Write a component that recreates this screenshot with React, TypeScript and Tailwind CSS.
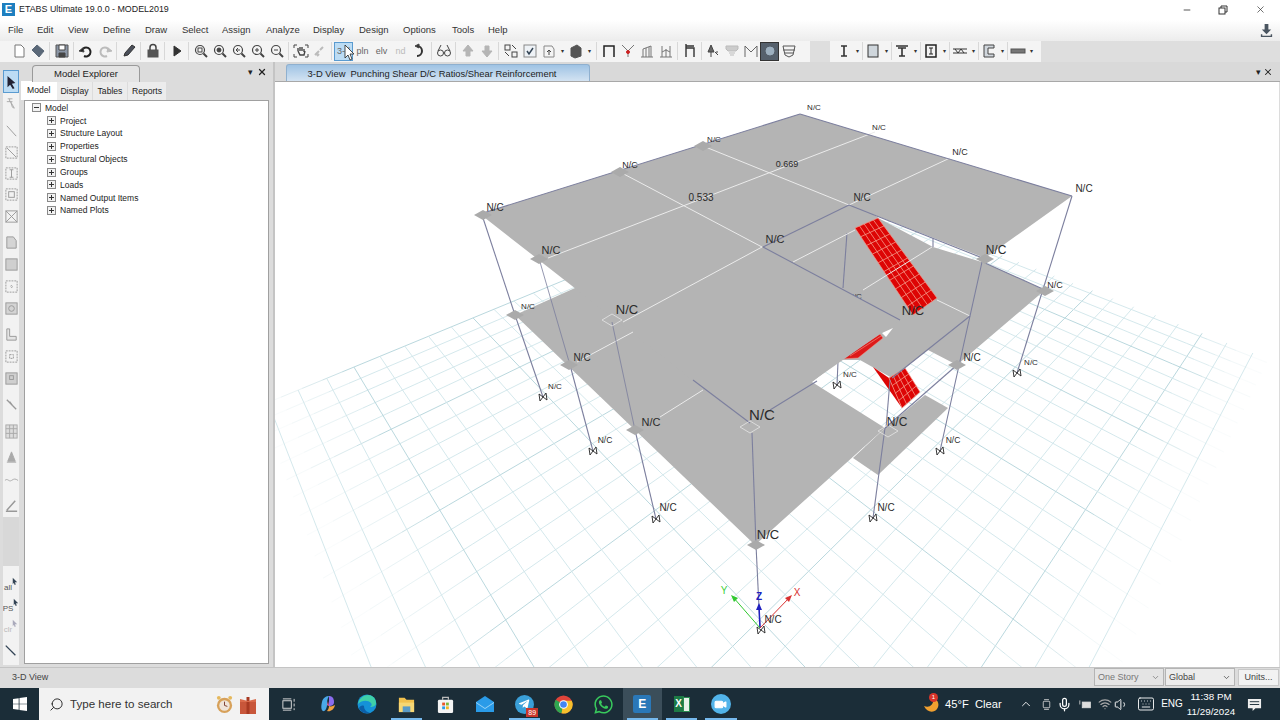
import React from "react";
import { FaWhatsapp, FaTelegramPlane } from "react-icons/fa";
import { Search, ChevronUp, ChevronDown, Mic, Volume1, Wifi, Keyboard, Video, Minus, X } from "lucide-react";

const FONT = "font-['Liberation_Sans',sans-serif]";

/* ---------- 3-D view maths: ground grid from the two vanishing points ---------- */
const pt = (p: number, q: number) => {
  const d = 1 - p - q;
  return [(807 - 70 * p - 1490 * q) / d, (180 + 106 * p + 102 * q) / d];
};

const P_MAX = 0.385;
const Q_MAX = 0.445;
const FADE = [1, 0.75, 0.5, 0.3, 0.12];

type Seg = { a: number[]; b: number[]; major: boolean; o: number };

const gridLines = () => {
  const out: Seg[] = [];
  const span = (at: (t: number) => number[], end: number, fade: number, major: boolean) => {
    out.push({ a: at(0), b: at(end - fade), major, o: 1 });
    FADE.forEach((o, n) => {
      const s = end - fade + (fade * n) / FADE.length;
      const e = end - fade + (fade * (n + 1)) / FADE.length;
      out.push({ a: at(s), b: at(e), major, o });
    });
  };
  for (let i = 0; (i * 0.0698) / 5 <= P_MAX; i++) {
    const p = (i * 0.0698) / 5;
    span((t) => pt(p, t), Q_MAX, 0.05, i % 5 === 0);
  }
  for (let i = -3; 0.0468 + (i * 0.0704) / 5 <= Q_MAX; i++) {
    const q = 0.0468 + (i * 0.0704) / 5;
    span((t) => pt(t, q), P_MAX, 0.04, (i + 5) % 5 === 0);
  }
  return out;
};

type V = [number, number];
const mix = (a: V, b: V, t: number): V => [a[0] + (b[0] - a[0]) * t, a[1] + (b[1] - a[1]) * t];

const Mesh = ({ a, b, c, d, nu, nv }: { a: V; b: V; c: V; d: V; nu: number; nv: number }) => {
  const lines: React.ReactNode[] = [];
  for (let i = 1; i < nu; i++) {
    const s = mix(a, b, i / nu);
    const e = mix(d, c, i / nu);
    lines.push(<line key={`u${i}`} x1={s[0]} y1={s[1]} x2={e[0]} y2={e[1]} stroke="#f49a8a" strokeWidth="0.8" />);
  }
  for (let i = 1; i < nv; i++) {
    const s = mix(a, d, i / nv);
    const e = mix(b, c, i / nv);
    lines.push(<line key={`v${i}`} x1={s[0]} y1={s[1]} x2={e[0]} y2={e[1]} stroke="#f49a8a" strokeWidth="0.8" />);
  }
  return (
    <g>
      <polygon points={[a, b, c, d].map((v) => v.join(",")).join(" ")} fill="#dd0505" stroke="#f49a8a" strokeWidth="0.7" />
      {lines}
    </g>
  );
};

const DARK = "#7c7f9e";
const darkLines: number[][] = [
  [480, 214, 800, 114],
  [800, 114, 1072, 196],
  [849, 205, 763, 247],
  [763, 247, 900, 320],
  [849, 205, 985, 259],
  [693, 380, 750, 423],
  [770, 410, 817, 381],
  [892, 378, 970, 316],
  [885, 428, 957, 365],
  [985, 263, 1045, 290],
];
const whiteLines: number[][] = [
  [620, 172, 762, 247],
  [703, 146, 849, 205],
  [548, 258, 875, 132],
  [762, 247, 623, 322],
  [950, 158, 849, 205],
  [793, 262, 855, 230],
  [932, 247, 863, 290],
  [937, 300, 970, 316],
  [577, 362, 633, 332],
  [660, 417, 703, 390],
];
const columns: number[][] = [
  [483, 218, 515, 315],
  [515, 315, 543, 397],
  [570, 365, 593, 451],
  [635, 430, 656, 519],
  [756, 545, 760, 628],
  [885, 428, 873, 518],
  [847, 233, 843, 288],
  [838, 362, 837, 385],
  [890, 380, 886, 428],
  [933, 238, 933, 247],
];
const labels: [string, number, number, number][] = [
  ["N/C", 814, 110, 8],
  ["N/C", 879, 130, 8],
  ["N/C", 714, 142, 8],
  ["N/C", 960, 155, 9],
  ["N/C", 630, 168, 9],
  ["0.669", 787, 167, 9],
  ["N/C", 862, 201, 10],
  ["N/C", 1084, 192, 10],
  ["N/C", 495, 211, 10],
  ["0.533", 701, 201, 10],
  ["N/C", 775, 243, 11],
  ["N/C", 551, 254, 11],
  ["N/C", 996, 254, 12],
  ["N/C", 627, 314, 13],
  ["N/C", 528, 309, 8],
  ["N/C", 1055, 288, 9],
  ["N/C", 913, 315, 13],
  ["N/C", 582, 361, 10],
  ["N/C", 972, 361, 10],
  ["N/C", 555, 389, 8],
  ["N/C", 850, 377, 8],
  ["N/C", 1031, 365, 8],
  ["N/C", 605, 443, 8.5],
  ["N/C", 953, 443, 8.5],
  ["N/C", 651, 426, 11],
  ["N/C", 897, 426, 12],
  ["N/C", 762, 420, 15],
  ["N/C", 668, 511, 10],
  ["N/C", 886, 511, 10],
  ["N/C", 768, 539, 13],
  ["N/C", 773, 623, 10],
];
const supports: V[] = [
  [543, 397],
  [593, 451],
  [656, 519],
  [837, 385],
  [873, 518],
  [940, 451],
  [1017, 373],
  [761, 630],
];
const nodes: V[] = [
  [483, 215],
  [539, 259],
  [620, 172],
  [703, 146],
  [515, 315],
  [569, 365],
  [635, 430],
  [985, 259],
  [1045, 291],
  [957, 365],
  [756, 545],
];
const outlineNodes: V[] = [
  [612, 320],
  [750, 427],
  [888, 431],
];

const ModelView = () => (
  <svg viewBox="275 82 1004 585" className="block w-[1004px] h-[585px] bg-white">
    {gridLines().map((l, i) => (
      <line
        key={i}
        x1={l.a[0]}
        y1={l.a[1]}
        x2={l.b[0]}
        y2={l.b[1]}
        stroke={l.major ? "#bad8de" : "#cfe5ea"}
        strokeWidth={l.major ? 1 : 0.9}
        opacity={l.o}
      />
    ))}

    {/* lower storey */}
    <polygon
      points="515,315 575,288 700,200 850,198 880,219 933,247 985,263 1045,290 957,365 928,350 892,378 860,360 840,360 812,382 885,428 755,545"
      fill="#b4b4b4"
    />
    <polygon points="853,458 878,475 948,408 925,395 885,428" fill="#b4b4b4" />
    <Mesh a={[855, 228]} b={[878, 218]} c={[937, 298]} d={[913, 315]} nu={5} nv={10} />
    <polygon points="842,359 880,334 883,338 858,358" fill="#dd1a1a" stroke="#f49a8a" strokeWidth="0.5" />
    <line x1="850" y1="356" x2="881" y2="336" stroke="#f49a8a" strokeWidth="0.6" />
    <polygon points="882,333 893,328 886,337" fill="#ffffff" />
    <polygon points="873,367 889,378 902,408" fill="#dd0505" />
    <Mesh a={[889, 378]} b={[905, 368]} c={[920, 392]} d={[902, 408]} nu={4} nv={4} />
    <text x="855" y="299" textAnchor="middle" fontSize="8" fill="#333">
      N/C
    </text>

    {columns.map((c, i) => (
      <line key={i} x1={c[0]} y1={c[1]} x2={c[2]} y2={c[3]} stroke={DARK} strokeWidth="1.1" />
    ))}

    {/* upper storey */}
    <polygon points="800,114 1072,196 985,258 849,205 763,247 900,320 750,425 480,214" fill="#b4b4b4" />
    {whiteLines.map((c, i) => (
      <line key={i} x1={c[0]} y1={c[1]} x2={c[2]} y2={c[3]} stroke="#ebebeb" strokeWidth="1" />
    ))}
    {darkLines.map((c, i) => (
      <line key={i} x1={c[0]} y1={c[1]} x2={c[2]} y2={c[3]} stroke={DARK} strokeWidth="1.1" />
    ))}
    <line x1="612" y1="322" x2="635" y2="430" stroke={DARK} strokeWidth="1" opacity="0.8" />
    <line x1="540" y1="262" x2="570" y2="365" stroke={DARK} strokeWidth="1" opacity="0.8" />
    <line x1="752" y1="433" x2="756" y2="545" stroke={DARK} strokeWidth="1.1" />
    <line x1="982" y1="262" x2="940" y2="451" stroke={DARK} strokeWidth="1.1" />
    <line x1="1072" y1="196" x2="1017" y2="373" stroke={DARK} strokeWidth="1.1" />

    {nodes.map((n, i) => (
      <polygon
        key={i}
        points={`${n[0] - 9},${n[1]} ${n[0]},${n[1] - 5} ${n[0] + 9},${n[1]} ${n[0]},${n[1] + 5}`}
        fill="#aaaaaa"
      />
    ))}
    {outlineNodes.map((n, i) => (
      <polygon
        key={i}
        points={`${n[0] - 10},${n[1]} ${n[0]},${n[1] - 6} ${n[0] + 10},${n[1]} ${n[0]},${n[1] + 6}`}
        fill="none"
        stroke="#e4e4e4"
        strokeWidth="0.8"
      />
    ))}

    {/* axes */}
    <g fontSize="10">
      <line x1="760" y1="628" x2="759" y2="606" stroke="#2020c0" strokeWidth="1.5" />
      <polygon points="759,603 756,610 762,610" fill="#2020c0" />
      <text x="759" y="600" textAnchor="middle" fill="#2020c0" fontWeight="bold">
        Z
      </text>
      <line x1="760" y1="628" x2="733" y2="597" stroke="#30c830" strokeWidth="1" />
      <polygon points="731,595 738,598 734,602" fill="#30c830" />
      <text x="724" y="594" textAnchor="middle" fill="#40d040">
        Y
      </text>
      <line x1="760" y1="628" x2="790" y2="597" stroke="#d83030" strokeWidth="1" />
      <polygon points="792,595 785,598 789,602" fill="#d83030" />
      <text x="797" y="596" textAnchor="middle" fill="#d83030">
        X
      </text>
    </g>

    {supports.map((s, i) => (
      <g key={i} stroke="#222" strokeWidth="0.9" fill="none">
        <path d={`M${s[0] - 4} ${s[1] - 3}L${s[0] + 4} ${s[1] + 3}L${s[0] + 3} ${s[1] - 4}L${s[0] - 3} ${s[1] + 4}Z`} />
      </g>
    ))}

    <g fill="#2b2b2b" textAnchor="middle">
      {labels.map(([t, x, y, size], i) => (
        <text key={i} x={x} y={y} fontSize={size}>
          {t}
        </text>
      ))}
    </g>
  </svg>
);

/* ---------- toolbar glyphs ---------- */
const G = ({ children, cls = "" }: { children: React.ReactNode; cls?: string }) => (
  <svg viewBox="0 0 16 16" className={`w-4 h-4 ${cls}`} fill="none" stroke="#444" strokeWidth="1">
    {children}
  </svg>
);

const Zoom = ({ inner }: { inner?: React.ReactNode }) => (
  <G>
    <circle cx="7" cy="7" r="4.5" strokeWidth="1.2" />
    <line x1="10.5" y1="10.5" x2="14" y2="14" strokeWidth="2" />
    {inner}
  </G>
);

const Btn = ({ children, cls = "" }: { children?: React.ReactNode; cls?: string }) => (
  <div className={`w-[19px] h-[19px] flex items-center justify-center shrink-0 ${cls}`}>{children}</div>
);

const Drop = () => <div className="w-[8px] text-center text-[6px] leading-none text-[#333] shrink-0">▾</div>;
const Sep = ({ w = "w-[5px]" }: { w?: string }) => <div className={`${w} h-[18px] shrink-0 flex justify-center`}><div className="w-px h-full bg-[#d8d8d8]" /></div>;
const Txt = ({ children, cls = "" }: { children: React.ReactNode; cls?: string }) => (
  <span className={`text-[9px] leading-none text-[#666] ${cls}`}>{children}</span>
);

const Toolbar = () => (
  <div className="flex h-[22px] bg-[#dedede]">
    <div className="flex items-center w-[810px] bg-[#f4f4f4] pl-[9px]">
      <Btn><G><path d="M4 2h6l3 3v9H4z" fill="#fff" stroke="#777" /></G></Btn>
      <Btn><G><path d="M2 7l5-5 7 6-5 6z" fill="#5a6878" stroke="#5a6878" /></G></Btn>
      <Sep />
      <Btn><G><path d="M2 2h12v12H2z" fill="#8a95a5" stroke="#555" /><path d="M5 2h6v5H5z" fill="#fff" /><path d="M5 10h6v4H5z" fill="#444" /></G></Btn>
      <Sep />
      <Btn><G><path d="M4 7a4.5 4.5 0 1 1 2 6" strokeWidth="2" stroke="#222" /><path d="M1 8l4-3 1 4z" fill="#222" /></G></Btn>
      <Btn><G><path d="M12 7a4.5 4.5 0 1 0-2 6" strokeWidth="2" stroke="#bbb" /><path d="M15 8l-4-3-1 4z" fill="#bbb" stroke="#bbb" /></G></Btn>
      <Sep />
      <Btn><G><path d="M3 13l1-3 7-8 3 2-7 8z" fill="#4a4f5a" stroke="#333" /></G></Btn>
      <Sep />
      <Btn><G><rect x="3" y="7" width="10" height="7" fill="#555" stroke="#555" /><path d="M5 7V4.5a3 3 0 0 1 6 0V7" strokeWidth="1.5" /></G></Btn>
      <Sep />
      <Btn><G><path d="M5 3l7 5-7 5z" fill="#333" stroke="#333" /></G></Btn>
      <Sep />
      <Btn><Zoom inner={<rect x="5" y="5" width="4" height="4" />} /></Btn>
      <Btn><Zoom inner={<circle cx="7" cy="7" r="2" fill="#444" />} /></Btn>
      <Btn><Zoom inner={<path d="M5 7h4M5 7l2-2M5 7l2 2" />} /></Btn>
      <Btn><Zoom inner={<path d="M5 7h4M7 5v4" />} /></Btn>
      <Btn><Zoom inner={<path d="M5 7h4" />} /></Btn>
      <Sep />
      <Btn><G><path d="M1 5V2h3M12 2h3v3M15 11v3h-3M4 14H1v-3" /><path d="M5 8V5M7 8V4M9 8V4M11 9V6M5 8l2 4h4l1-4" strokeWidth="1.4" /></G></Btn>
      <Btn><G><path d="M3 12l4-4M8 7l3-3M5 13l2-2" stroke="#bbb" strokeWidth="2" /></G></Btn>
      <Sep />
      <Btn cls="bg-[#bcdcf4] border border-[#5a9bd0]"><Txt cls="text-[#333]">3-d</Txt></Btn>
      <Btn><Txt>pln</Txt></Btn>
      <Btn><Txt>elv</Txt></Btn>
      <Btn><Txt cls="text-[#bbb]">nd</Txt></Btn>
      <Btn><G><path d="M5 3a5 5 0 1 1 0 10" strokeWidth="2" stroke="#333" /><path d="M3 3l4-2v4z" fill="#333" /></G></Btn>
      <Sep />
      <Btn><G><circle cx="4.5" cy="10" r="3" /><circle cx="11.5" cy="10" r="3" /><path d="M7.5 10h1M2 8l3-6M14 8l-3-6" /></G></Btn>
      <Sep />
      <Btn><G><path d="M8 2l5 6h-3v5H6V8H3z" fill="#b5b5b5" stroke="#b5b5b5" /></G></Btn>
      <Btn><G><path d="M8 14l5-6h-3V3H6v5H3z" fill="#b5b5b5" stroke="#b5b5b5" /></G></Btn>
      <Sep />
      <Btn><G><rect x="2" y="2" width="5" height="5" /><path d="M9 2l4 4M2 9l4 4" /><rect x="9" y="9" width="5" height="5" /></G></Btn>
      <Btn><G><rect x="2" y="2" width="12" height="12" stroke="#888" fill="#eef2f6" /><path d="M5 8l2 3 4-6" stroke="#345" strokeWidth="1.5" /></G></Btn>
      <Btn><G><path d="M3 3h8l2 3v8H3z" stroke="#888" /><path d="M8 12V7M6 9l2-2 2 2" /></G></Btn>
      <Drop />
      <Btn><G><path d="M3 5l6-3 4 3v8l-6 2-4-2z" fill="#555" stroke="#555" /></G></Btn>
      <Drop />
      <Sep w="w-[6px]" />
      <Btn><G><path d="M3 14V3h10v11" strokeWidth="1.5" stroke="#222" /></G></Btn>
      <Btn><G><path d="M2 2l6 6 6-6M8 8v6" stroke="#777" /><circle cx="8" cy="9" r="1.5" fill="#c22" stroke="#c22" /></G></Btn>
      <Btn><G><path d="M2 14h12M4 14V6l8-3v11M7 14V5M10 14V4" stroke="#777" /></G></Btn>
      <Btn><G><path d="M2 14h12M4 3v11M8 6v8M12 3v11M4 9l4-2 4 2" stroke="#777" /></G></Btn>
      <Sep />
      <Btn><G><path d="M4 14V5h8v9M4 3h8M4 1v4" stroke="#333" strokeWidth="1.4" /></G></Btn>
      <Sep w="w-[4px]" />
      <Btn><G><path d="M6 2L3 9h6zM6 9v5M10 9l3 3M13 9h-2" stroke="#444" fill="#666" /></G></Btn>
      <Btn><G><path d="M2 3h12v3l-2 2H4L2 6zM5 10h6M6 12h4" stroke="#bbb" fill="#ccc" /></G></Btn>
      <Btn><G><path d="M2 14V3l6 6 6-6v11" stroke="#666" /></G></Btn>
      <Btn cls="bg-[#55606c] border border-[#333]"><G><circle cx="8" cy="8" r="4" fill="#9db0c0" stroke="#9db0c0" /></G></Btn>
      <Btn><G><path d="M2 3h12l-2 9-4 2-4-2zM2 7h12M4 10h8" stroke="#555" /></G></Btn>
    </div>
    <div className="w-[20px]" />
    <div className="flex items-center w-[211px] bg-[#f4f4f4] pl-[4px]">
      <Btn><G><path d="M5 3h6M5 13h6M8 3v10" stroke="#333" strokeWidth="1.6" /></G></Btn><Drop />
      <Sep w="w-[2px]" />
      <Btn><G><rect x="3" y="2" width="10" height="12" fill="#cfd6dc" stroke="#333" /></G></Btn><Drop />
      <Sep w="w-[2px]" />
      <Btn><G><path d="M2 3h12M4 5h8M8 5v8M5 13h6" stroke="#333" strokeWidth="1.6" /></G></Btn><Drop />
      <Sep w="w-[2px]" />
      <Btn><G><rect x="3" y="2" width="10" height="12" stroke="#222" strokeWidth="1.5" /><path d="M6 5h4M6 11h4M8 5v6" stroke="#222" /></G></Btn><Drop />
      <Sep w="w-[2px]" />
      <Btn><G><path d="M1 6h14M1 10h14M3 6l3 4 3-4 3 4" stroke="#333" /></G></Btn><Drop />
      <Sep w="w-[2px]" />
      <Btn><G><path d="M3 2h10v3H7v6h6v3H3z" fill="#d0d6dc" stroke="#444" /></G></Btn><Drop />
      <Sep w="w-[2px]" />
      <Btn><G><rect x="1" y="6" width="14" height="4" fill="#777" stroke="#555" /></G></Btn><Drop />
    </div>
    <div className="flex-1" />
  </div>
);

/* ---------- left rail ---------- */
const railIcons: [string, React.ReactNode][] = [
  ["", <path d="M4 3h5M6 3v3M7 6l4 7-2-1zM3 6h6" stroke="#aaa" />],
  ["mt-[6px]", <path d="M3 3l10 11" stroke="#999" />],
  ["mt-[1px]", <g stroke="#999" strokeDasharray="2 1"><rect x="2" y="2" width="12" height="12" /><path d="M3 3l10 10" strokeDasharray="0" /></g>],
  ["", <g stroke="#999" strokeDasharray="2 1"><rect x="2" y="2" width="12" height="12" /><path d="M6 4h4M6 12h4M8 4v8" strokeDasharray="0" /></g>],
  ["", <g stroke="#999"><rect x="2" y="2" width="12" height="12" strokeDasharray="2 1" /><rect x="5" y="5" width="6" height="6" /></g>],
  ["mt-[1px]", <g stroke="#999"><rect x="2" y="2" width="12" height="12" /><path d="M2 2l12 12M14 2L2 14" /></g>],
  ["mt-[5px]", <path d="M3 2h7l3 4v8H3z" fill="#d4d4d4" stroke="#999" />],
  ["mt-[1px]", <rect x="2" y="2" width="12" height="12" fill="#cfcfcf" stroke="#999" />],
  ["mt-[1px]", <g stroke="#999" strokeDasharray="2 1"><rect x="2" y="2" width="12" height="12" /><circle cx="8" cy="8" r="1" /></g>],
  ["mt-[1px]", <g stroke="#999"><rect x="2" y="2" width="12" height="12" fill="#d4d4d4" /><circle cx="8" cy="8" r="3" /></g>],
  ["mt-[5px]", <path d="M3 2h3v8h7v4H3z" fill="#e4e4e4" stroke="#999" />],
  ["mt-[1px]", <g stroke="#999" strokeDasharray="2 1"><rect x="2" y="2" width="12" height="12" /><rect x="6" y="6" width="4" height="4" /></g>],
  ["mt-[1px]", <g stroke="#999"><rect x="2" y="2" width="12" height="12" fill="#cfcfcf" /><rect x="6" y="5" width="4" height="4" /></g>],
  ["mt-[5px]", <path d="M3 3l10 10M6 5l3 4" stroke="#999" strokeWidth="1.4" />],
  ["mt-[6px]", <g stroke="#aaa" fill="#ddd"><rect x="2" y="1" width="12" height="14" /><path d="M2 5h12M2 10h12M6 1v14M10 1v14" /></g>],
  ["mt-[5px]", <path d="M8 2l4 10H4zM3 13h10" fill="#aaa" stroke="#aaa" />],
  ["mt-[1px]", <path d="M1 9c3-3 4 2 7 0s4-2 7 0" stroke="#aaa" />],
  ["mt-[5px]", <path d="M3 13l9-10M2 14h12" stroke="#999" strokeWidth="1.6" />],
];

const MiniArrow = ({ dim }: { dim?: boolean }) => (
  <svg viewBox="0 0 8 10" className="w-[6px] h-[9px] -mt-[6px]">
    <path d="M1 0l6 6-3 0 1 3-1.5 .6-1-3-1.5 2z" fill={dim ? "#aab" : "#345"} />
  </svg>
);

const LeftRail = () => (
  <div className="w-[16px] ml-[3px] flex flex-col bg-[#f2f2f2] mt-[8px] mb-[2px] shrink-0 overflow-hidden">
    <div className="h-[23px] w-[16px] bg-[#bcdcf4] border border-[#5a9bd0] flex items-center justify-center shrink-0">
      <svg viewBox="0 0 16 16" className="w-4 h-4"><path d="M4 1l9 8-4 1 3 5-2 1-3-5-3 3z" fill="#223" /></svg>
    </div>
    {railIcons.map(([m, icon], i) => (
      <div key={i} className={`h-[21px] ${m} flex items-center justify-center shrink-0`}>
        <svg viewBox="0 0 16 16" className="w-[15px] h-[15px]" fill="none">{icon}</svg>
      </div>
    ))}
    <div className="h-[49px] mt-[1px] bg-[#d8d8d8] shrink-0" />
    <div className="flex-1 flex flex-col items-center pt-[17px] gap-[12px] text-[8px] leading-[9px] text-[#555]">
      <div className="flex">all<MiniArrow /></div>
      <div className="flex">PS<MiniArrow /></div>
      <div className="flex text-[#bbb]">clr<MiniArrow dim /></div>
      <svg viewBox="0 0 16 16" className="w-3.5 h-3.5 -mt-[3px]" fill="none"><path d="M2 3l11 11" stroke="#345" strokeWidth="1.5" /></svg>
    </div>
  </div>
);

/* ---------- explorer ---------- */
const treeItems = ["Project", "Structure Layout", "Properties", "Structural Objects", "Groups", "Loads", "Named Output Items", "Named Plots"];

const Expander = ({ open }: { open?: boolean }) => (
  <svg viewBox="0 0 9 9" className="w-[9px] h-[9px] shrink-0">
    <rect x="0.5" y="0.5" width="8" height="8" fill="#f2f2f2" stroke="#8a8a8a" />
    <path d={open ? "M2 4.5h5" : "M2 4.5h5M4.5 2v5"} stroke="#333" />
  </svg>
);

const Explorer = () => (
  <div className="w-[252px] ml-[2px] flex flex-col shrink-0">
    <div className="h-[20px] flex items-end relative">
      <div className="ml-[11px] w-[108px] h-[17px] border border-b-0 border-[#9a9a9a] rounded-t-[4px] bg-[#e4e4e4] text-[9.5px] leading-[15px] text-center text-[#222]">
        Model Explorer
      </div>
      <span className="absolute right-[20px] top-[6px] text-[9px] leading-none text-[#222]">▾</span>
      <X className="absolute right-[6px] top-[5px] w-[10px] h-[10px] text-[#222]" strokeWidth={3} />
    </div>
    <div className="h-[18px] flex text-[8.6px] leading-[18px] text-[#222]">
      <div className="w-[36px] bg-white pl-[6px] -mt-[1px] h-[19px]">Model</div>
      <div className="w-[36px] bg-[#ececec] text-center border-r border-[#dcdcdc]">Display</div>
      <div className="w-[35px] bg-[#ececec] text-center border-r border-[#dcdcdc]">Tables</div>
      <div className="w-[38px] bg-[#ececec] text-center">Reports</div>
    </div>
    <div className="ml-[3px] w-[245px] h-[564px] bg-white border border-[#a0a0a0] text-[8.5px] text-[#222]">
      <div className="h-[13px] flex items-center pl-[7px] gap-[3px] leading-none">
        <Expander open />
        <span className="ml-[1px]">Model</span>
      </div>
      {treeItems.map((t) => (
        <div key={t} className="h-[12.85px] flex items-center pl-[22px] gap-[4px] leading-none">
          <Expander />
          <span>{t}</span>
        </div>
      ))}
    </div>
  </div>
);

/* ---------- taskbar ---------- */
const TaskIcon = ({ children, cls = "" }: { children: React.ReactNode; cls?: string }) => (
  <div className={`w-[39.3px] h-full flex items-center justify-center shrink-0 relative ${cls}`}>{children}</div>
);

const Underline = () => <div className="absolute bottom-0 left-[4px] right-[4px] h-[2px] bg-[#76b9ed]" />;

const Taskbar = () => (
  <div className={`h-[32px] bg-[#1b2d38] flex items-center text-white ${FONT}`}>
    <div className="w-[39px] flex justify-center">
      <svg viewBox="0 0 16 16" className="w-[14px] h-[14px]" fill="#fff">
        <path d="M0 2.2l6.5-.9v6.3H0zM7.4 1.2L16 0v7.6H7.4zM0 8.4h6.5v6.3L0 13.8zM7.4 8.4H16V16l-8.6-1.2z" />
      </svg>
    </div>
    <div className="w-[230px] h-full bg-[#f2f2f2] flex items-center pl-[10px] text-[#333] shrink-0">
      <Search className="w-[15px] h-[15px] -scale-x-100 text-[#222]" strokeWidth={1.5} />
      <span className="ml-[6px] text-[11.6px] leading-none w-[145px]">Type here to search</span>
      <svg viewBox="0 0 20 20" className="w-[19px] h-[19px]">
        <circle cx="10" cy="11" r="8" fill="#d7a15a" /><circle cx="10" cy="11" r="5.5" fill="#efe4da" /><path d="M10 7v4l3 1" stroke="#7a3b2e" fill="none" /><circle cx="4" cy="3" r="2" fill="#e5b85c" /><circle cx="16" cy="3" r="2" fill="#e5b85c" />
      </svg>
      <svg viewBox="0 0 20 20" className="w-[20px] h-[20px] ml-[4px]">
        <rect x="2" y="7" width="16" height="13" fill="#c8563a" /><rect x="8.5" y="3" width="3" height="17" fill="#a83a22" /><path d="M2 5l8 2 8-2v3H2z" fill="#d96a4a" />
      </svg>
    </div>
    <TaskIcon>
      <svg viewBox="0 0 16 16" className="w-[15px] h-[15px]" fill="none" stroke="#ddd">
        <rect x="2" y="4" width="9" height="8" /><path d="M2 2h9M2 14h9M14 2v3M14 7v3M14 12v2" />
      </svg>
    </TaskIcon>
    <TaskIcon>
      <svg viewBox="0 0 20 20" className="w-[20px] h-[20px]">
        <path d="M4 8c1-5 5-6 7-6-2 3-2 6-2 9s-2 7-4 6-2-5-1-9z" fill="#4aa8e8" /><path d="M11 2c3 0 5 2 5 6 0 3-2 4-5 4 0-3 0-7 0-10z" fill="#8a6cf0" /><path d="M9 17c3 1 7-1 8-6-2 1-4 2-6 1 0 2-1 4-2 5z" fill="#f0a040" /><path d="M11 12c-1 0-2-1-2-1l1-4 1 5z" fill="#e860a0" />
      </svg>
    </TaskIcon>
    <TaskIcon>
      <svg viewBox="0 0 20 20" className="w-[20px] h-[20px]">
        <circle cx="10" cy="10" r="9.5" fill="#1592d8" /><path d="M1 10C2 4 7 1 11 1c4 0 8 3 8 8 0 3-3 4-6 4 2-1 2-3 1-4-3-3-9-3-13 1z" fill="#3fd0a8" /><path d="M7 12c0 4 3 6 6 7-3 1-9 0-11-5 1-2 3-3 5-2z" fill="#0c5fa8" />
      </svg>
    </TaskIcon>
    <TaskIcon>
      <svg viewBox="0 0 20 20" className="w-[19px] h-[19px]">
        <path d="M2 3h6l2 2h8v13H2z" fill="#f2c14e" /><rect x="2" y="8" width="16" height="10" fill="#f7d774" /><rect x="6" y="12" width="8" height="6" fill="#5a9bc8" />
      </svg>
      <Underline />
    </TaskIcon>
    <TaskIcon>
      <svg viewBox="0 0 20 20" className="w-[19px] h-[19px]">
        <rect x="2" y="5" width="16" height="14" rx="1.5" fill="#f4f4f4" /><path d="M7 5V2.5h6V5" fill="none" stroke="#bbb" strokeWidth="1.3" /><rect x="6.5" y="8" width="3" height="3" fill="#e8562a" /><rect x="10.5" y="8" width="3" height="3" fill="#7db83a" /><rect x="6.5" y="12" width="3" height="3" fill="#2a9be8" /><rect x="10.5" y="12" width="3" height="3" fill="#f2b824" />
      </svg>
    </TaskIcon>
    <TaskIcon>
      <svg viewBox="0 0 20 20" className="w-[20px] h-[20px]">
        <path d="M1 8l9-6 9 6v10H1z" fill="#2a9be8" /><path d="M1 8l9 6 9-6v1l-9 6-9-6z" fill="#9bd4f6" />
      </svg>
    </TaskIcon>
    <TaskIcon>
      <div className="w-[19px] h-[19px] rounded-full bg-[#3a9fd8] flex items-center justify-center">
        <FaTelegramPlane className="w-[12px] h-[12px] text-white" />
      </div>
      <div className="absolute right-[6px] bottom-[3px] bg-[#c9362b] text-[7px] leading-[9px] px-[2px] text-white">89</div>
      <Underline />
    </TaskIcon>
    <TaskIcon>
      <svg viewBox="0 0 20 20" className="w-[19px] h-[19px]">
        <circle cx="10" cy="10" r="9.5" fill="#e0443a" /><path d="M10 10L1.8 5A9.5 9.5 0 0 0 8 19.3z" fill="#2fa650" /><path d="M10 6h8.7A9.5 9.5 0 0 1 8 19.3z" fill="#f6c02c" /><circle cx="10" cy="10" r="4.6" fill="#fff" /><circle cx="10" cy="10" r="3.5" fill="#4285f4" />
      </svg>
    </TaskIcon>
    <TaskIcon>
      <FaWhatsapp className="w-[21px] h-[21px] text-[#38c95c]" />
    </TaskIcon>
    <TaskIcon cls="bg-[#3b4e5a]">
      <div className="w-[18px] h-[18px] bg-[#2a78b8] rounded-[2px] flex items-center justify-center text-[12px] font-bold leading-none">E</div>
      <Underline />
    </TaskIcon>
    <TaskIcon>
      <div className="w-[10px] h-[16px] bg-[#1d7a45] text-[10px] font-bold leading-[16px] text-center -mr-[1px]">X</div>
      <div className="w-[7px] h-[15px] bg-[#e8f2ea] border border-[#2a8a50]" />
      <Underline />
    </TaskIcon>
    <TaskIcon>
      <div className="w-[20px] h-[20px] rounded-full bg-[#52b4ea] flex items-center justify-center">
        <Video className="w-[13px] h-[13px] text-white" fill="#fff" />
      </div>
      <Underline />
    </TaskIcon>
    <div className="flex-1" />
    <div className="w-[358px] flex items-center shrink-0">
      <div className="relative w-[20px] h-[22px] shrink-0">
        <svg viewBox="0 0 20 22" className="w-[20px] h-[22px]"><path d="M2 13c5 2 9 0 10-8 4 2 6 7 3 11-3 4-10 4-13-3z" fill="#f0a030" /></svg>
        <div className="absolute top-0 left-[7px] w-[9px] h-[9px] rounded-full bg-[#d8342a] text-[6px] leading-[9px] text-center">1</div>
      </div>
      <span className="ml-[3px] text-[11.2px] leading-none whitespace-pre w-[60px] shrink-0">45°F  Clear</span>
      <ChevronUp className="ml-[14px] w-[14px] h-[14px] shrink-0" strokeWidth={1.5} />
      <svg viewBox="0 0 16 16" className="ml-[6.5px] w-[13px] h-[15px] shrink-0" fill="none" stroke="#ddd"><rect x="4" y="4" width="8" height="8" rx="1" /><path d="M5 2h6M5 14h6" /></svg>
      <Mic className="ml-[4px] w-[15px] h-[15px] shrink-0" />
      <svg viewBox="0 0 16 16" className="ml-[6px] w-[15px] h-[13px] shrink-0" fill="none" stroke="#ddd"><rect x="4" y="5" width="10" height="7" fill="#ddd" /><path d="M1 3v5" /></svg>
      <Wifi className="ml-[5.5px] w-[14px] h-[14px] text-[#aaa] shrink-0" />
      <Volume1 className="ml-[1.5px] w-[15px] h-[15px] shrink-0" strokeWidth={1.5} />
      <Keyboard className="ml-[7.5px] w-[20px] h-[18px] shrink-0" strokeWidth={1.2} />
      <span className="ml-[4px] w-[24px] text-center text-[10px] leading-none shrink-0">ENG</span>
      <div className="ml-[2px] w-[50px] text-center text-[9.8px] leading-[15px] shrink-0">
        <div>11:38 PM</div>
        <div className="whitespace-nowrap">11/29/2024</div>
      </div>
      <svg viewBox="0 0 16 16" className="ml-[10.5px] w-[15px] h-[15px] shrink-0"><path d="M1 2h14v10H9l-3 3v-3H1z" fill="#eee" /><path d="M3 5h10M3 8h10" stroke="#1b2d38" /></svg>
    </div>
  </div>
);

/* ---------- page ---------- */
export default function App() {
  return (
    <div className={`w-[1280px] h-[720px] overflow-hidden flex flex-col bg-white relative ${FONT}`}>
      <div className="h-[20px] flex items-center bg-white">
        <div className="ml-[2px] w-[13px] h-[13px] bg-[#1e7fc0] text-white text-[11px] font-bold leading-[13px] text-center">E</div>
        <span className="ml-[4px] text-[8.9px] leading-none text-[#222]">ETABS Ultimate 19.0.0 - MODEL2019</span>
        <div className="flex-1" />
        <Minus className="w-[10px] h-[10px] text-[#333] mr-[26px]" />
        <svg viewBox="0 0 10 10" className="w-[10px] h-[10px] mr-[27px]" fill="none" stroke="#333"><rect x="1" y="3" width="6" height="6" /><path d="M3 3V1h6v6H7" /></svg>
        <X className="w-[11px] h-[11px] text-[#333] mr-[14px]" strokeWidth={1.5} />
      </div>
      <div className="h-[21px] flex items-center bg-gradient-to-b from-white to-[#ececec] pl-[8px] text-[9.5px] text-[#333] relative">
        <span className="w-[29px]">File</span>
        <span className="w-[31px]">Edit</span>
        <span className="w-[35px]">View</span>
        <span className="w-[42px]">Define</span>
        <span className="w-[37px]">Draw</span>
        <span className="w-[40px]">Select</span>
        <span className="w-[44px]">Assign</span>
        <span className="w-[47px]">Analyze</span>
        <span className="w-[46px]">Display</span>
        <span className="w-[44px]">Design</span>
        <span className="w-[49px]">Options</span>
        <span className="w-[36px]">Tools</span>
        <span>Help</span>
        <svg viewBox="0 0 16 16" className="absolute right-[6px] top-[3px] w-[15px] h-[15px]" fill="#4a5560"><path d="M6 1h4v6h3l-5 5-5-5h3z" /><path d="M2 12v3h12v-3h-1.5v1.5h-9V12z" /></svg>
      </div>
      <Toolbar />

      <div className="h-[605px] flex bg-[#dcdcdc]">
        <LeftRail />
        <Explorer />
        <div className="w-[2px] shrink-0 bg-[#c4c4c4]" />
        <div className="flex-1 flex flex-col min-w-0">
          <div className="h-[20px] flex items-end bg-[#d9d9d9] relative border-b border-[#a8a8a8]">
            <div className="ml-[11px] w-[304px] h-[17px] rounded-t-[3px] border border-b-0 border-[#8fb0cf] bg-gradient-to-b from-[#9fc3e4] to-[#d3e3f2] text-[9.4px] leading-[17px] text-center whitespace-pre text-[#222] pr-[12px]">
              3-D View  Punching Shear D/C Ratios/Shear Reinforcement
            </div>
            <span className="absolute right-[19px] top-[6px] text-[9px] leading-none text-[#222]">▾</span>
            <X className="absolute right-[7px] top-[5px] w-[10px] h-[10px] text-[#222]" strokeWidth={2.5} />
          </div>
          <div className="flex-1 min-h-0 overflow-hidden">
            <ModelView />
          </div>
        </div>
      </div>

      <div className="h-[21px] flex items-center bg-[#dcdcdc] border-t border-[#c4c4c4] text-[9px] text-[#444] pb-[2px]">
        <span className="ml-[12px]">3-D View</span>
        <div className="flex-1" />
        <div className="w-[70px] h-[18px] border border-[#b4b4b4] bg-[#e4e4e4] flex items-center justify-between px-[3px] text-[#777]">
          <span>One Story</span>
          <ChevronDown className="w-[9px] h-[9px]" />
        </div>
        <div className="ml-[1px] w-[70px] h-[18px] border border-[#b4b4b4] bg-[#ececec] flex items-center justify-between px-[3px]">
          <span>Global</span>
          <ChevronDown className="w-[9px] h-[9px]" />
        </div>
        <div className="ml-[3px] mr-[1px] w-[41px] h-[17px] border border-[#c8c8c8] bg-[#f2f2f2] leading-[15px] text-center">Units...</div>
      </div>

      <Taskbar />

      {/* mouse pointer resting over the 3-d button */}
      <svg viewBox="0 0 12 18" className="absolute left-[344px] top-[44px] w-[12px] h-[18px]">
        <path d="M1 1v13l3-3 2 5 2-1-2-5h4z" fill="#fff" stroke="#222" strokeWidth="0.8" />
      </svg>
    </div>
  );
}
